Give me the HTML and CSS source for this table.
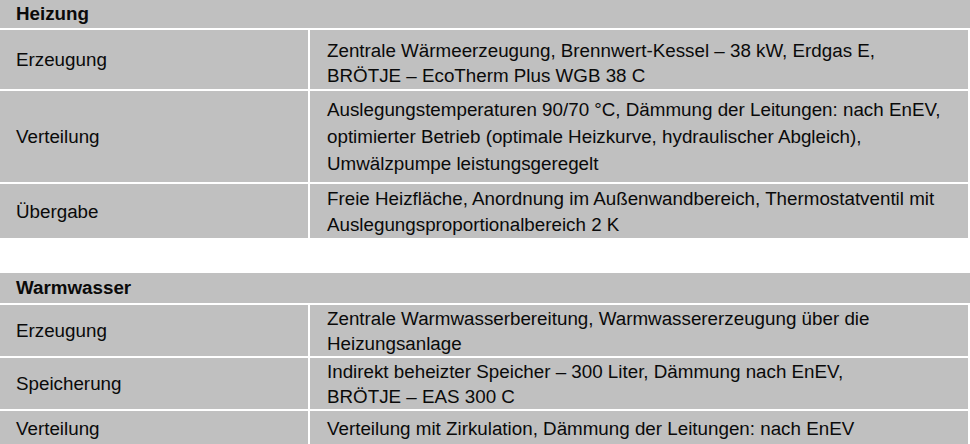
FILE: index.html
```html
<!DOCTYPE html>
<html lang="de">
<head>
<meta charset="utf-8">
<title>Heizung / Warmwasser</title>
<link rel="stylesheet" href="styles.css">
</head>
<body>
<section class="table">
  <div class="head h-heiz">Heizung</div>
  <div class="row r-erz1">
    <div class="label">Erzeugung</div>
    <div class="value">Zentrale Wärmeerzeugung, Brennwert-Kessel – 38 kW, Erdgas E,<br>BRÖTJE – EcoTherm Plus WGB 38 C</div>
  </div>
  <div class="row r-vert1">
    <div class="label">Verteilung</div>
    <div class="value wide">Auslegungstemperaturen 90/70 °C, Dämmung der Leitungen: nach EnEV,<br>optimierter Betrieb (optimale Heizkurve, hydraulischer Abgleich),<br>Umwälzpumpe leistungsgeregelt</div>
  </div>
  <div class="row r-ueb">
    <div class="label">Übergabe</div>
    <div class="value">Freie Heizfläche, Anordnung im Außenwandbereich, Thermostatventil mit<br>Auslegungsproportionalbereich 2 K</div>
  </div>
</section>
<section class="table second">
  <div class="head h-ww">Warmwasser</div>
  <div class="row r-erz2">
    <div class="label">Erzeugung</div>
    <div class="value">Zentrale Warmwasserbereitung, Warmwassererzeugung über die<br>Heizungsanlage</div>
  </div>
  <div class="row r-spei">
    <div class="label">Speicherung</div>
    <div class="value">Indirekt beheizter Speicher – 300 Liter, Dämmung nach EnEV,<br>BRÖTJE – EAS 300 C</div>
  </div>
  <div class="row r-vert2">
    <div class="label">Verteilung</div>
    <div class="value">Verteilung mit Zirkulation, Dämmung der Leitungen: nach EnEV</div>
  </div>
</section>
</body>
</html>
```
FILE: styles.css
```css
html, body {
  margin: 0;
  padding: 0;
  background: #ffffff;
}
body {
  width: 970px;
  height: 444px;
  overflow: hidden;
  font-family: "Liberation Sans", Arial, sans-serif;
  font-size: 18.8px;
  color: #0a0a0a;
}
.table {
  display: flex;
  flex-direction: column;
  gap: 2px;
  background: #ffffff;
}
.second {
  margin-top: 35px;
}
.head {
  background: #c0c0c0;
  font-weight: bold;
  padding-left: 16px;
  display: flex;
  align-items: center;
  width: 954px;
}
.h-heiz { height: 28px; }
.h-ww { height: 30px; }
.row {
  display: grid;
  grid-template-columns: 308px 1fr;
  column-gap: 2px;
  width: 968px;
}
.label, .value {
  background: #c0c0c0;
  display: flex;
  align-items: center;
  line-height: 25px;
  white-space: nowrap;
  box-sizing: border-box;
}
.label { padding-left: 16px; }
.value { padding-left: 17px; }
.wide { line-height: 27px; }
.r-erz1 { height: 59px; }
.r-erz1 .value { padding-top: 6px; }
.r-vert1 { height: 91px; }
.r-ueb { height: 54px; }
.r-ueb .value { line-height: 26px; padding-top: 2px; }
.r-erz2 { height: 51px; }
.r-spei { height: 51px; }
.r-vert2 { height: 40px; }
.r-vert2 .label, .r-vert2 .value { align-items: flex-start; padding-top: 5px; }
```
